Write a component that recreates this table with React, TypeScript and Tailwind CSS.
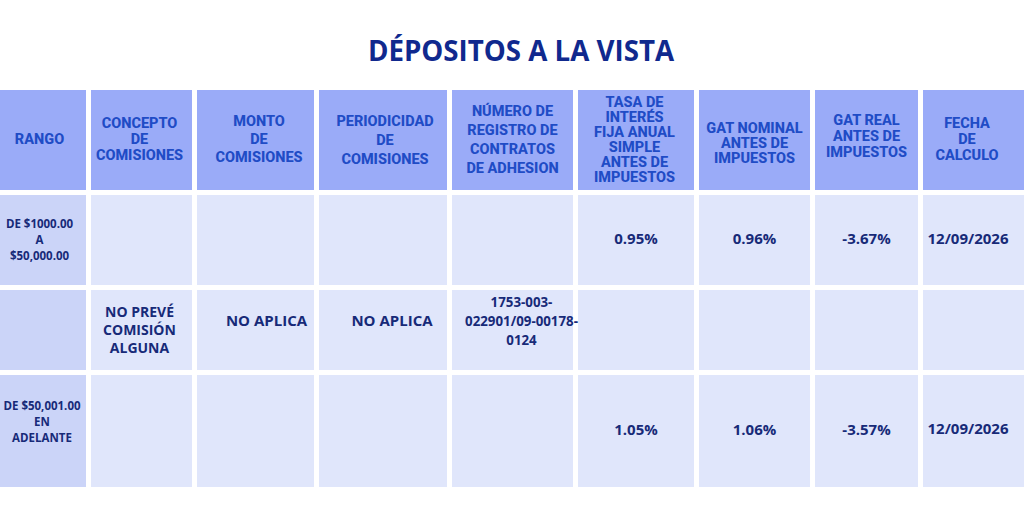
import React from 'react';

type Cell = {
  lines: string[];
  className?: string;
};

const headers: Cell[] = [
  { lines: ['RANGO'], className: 'pr-[7px] leading-[16px]' },
  { lines: ['CONCEPTO', 'DE', 'COMISIONES'], className: 'pr-[4px] leading-[16px]' },
  { lines: ['MONTO', 'DE', 'COMISIONES'], className: 'pl-[7px] leading-[18px]' },
  { lines: ['PERIODICIDAD', 'DE', 'COMISIONES'], className: 'pl-[4px] leading-[19px]' },
  { lines: ['NÚMERO DE', 'REGISTRO DE', 'CONTRATOS', 'DE ADHESION'], className: 'leading-[19px]' },
  { lines: ['TASA DE', 'INTERÉS', 'FIJA ANUAL', 'SIMPLE', 'ANTES DE', 'IMPUESTOS'], className: 'pr-[3px] leading-[15px]' },
  { lines: ['GAT NOMINAL', 'ANTES DE', 'IMPUESTOS'], className: 'pt-[6px] leading-[15px]' },
  { lines: ['GAT REAL', 'ANTES DE', 'IMPUESTOS'], className: 'pb-[7px] leading-[16px]' },
  { lines: ['FECHA', 'DE', 'CALCULO'], className: 'pr-[13px] leading-[16px]' },
];

const rows: Cell[][] = [
  [
    { lines: ['DE $1000.00', 'A', '$50,000.00'], className: 'pr-[7px] text-[11.5px] leading-[16px]' },
    { lines: [] },
    { lines: [] },
    { lines: [] },
    { lines: [] },
    { lines: ['0.95%'], className: 'pb-[4px] text-[15px]' },
    { lines: ['0.96%'], className: 'pb-[4px] text-[15px]' },
    { lines: ['-3.67%'], className: 'pb-[4px] text-[15px]' },
    { lines: ['12/09/2026'], className: 'pb-[4px] pr-[11px] text-[15px]' },
  ],
  [
    { lines: [] },
    { lines: ['NO PREVÉ', 'COMISIÓN', 'ALGUNA'], className: 'pr-[4px] text-[14px] leading-[18px]' },
    { lines: ['NO APLICA'], className: 'pl-[22px] pb-[19px] text-[15px]' },
    { lines: ['NO APLICA'], className: 'pl-[18px] pb-[19px] text-[15px]' },
    { lines: ['1753-003-', '022901/09-00178-', '0124'], className: 'relative z-10 pl-[18px] pb-[18px] text-[13.3px] leading-[19px]' },
    { lines: [] },
    { lines: [] },
    { lines: [] },
    { lines: [] },
  ],
  [
    { lines: ['DE $50,001.00', 'EN', 'ADELANTE'], className: 'pr-[2px] pb-[18px] text-[11.5px] leading-[16px]' },
    { lines: [] },
    { lines: [] },
    { lines: [] },
    { lines: [] },
    { lines: ['1.05%'], className: 'pb-[4px] text-[15px]' },
    { lines: ['1.06%'], className: 'pb-[4px] text-[15px]' },
    { lines: ['-3.57%'], className: 'pb-[4px] text-[15px]' },
    { lines: ['12/09/2026'], className: 'pb-[6px] pr-[11px] text-[15px]' },
  ],
];

const Lines: React.FC<{ lines: string[] }> = ({ lines }) => (
  <>
    {lines.map((line, i) => (
      <div key={i} className="whitespace-nowrap">
        {line}
      </div>
    ))}
  </>
);

const App: React.FC = () => {
  return (
    <div className="w-[1024px] h-[512px] bg-white overflow-hidden">
      <div className="h-[90px] flex items-center justify-center pt-[12px] pl-[18px]">
        <h1 className="text-[27.7px] font-bold text-[#10298e] font-['Open_Sans',sans-serif]">
          DÉPOSITOS A LA VISTA
        </h1>
      </div>

      <div className="grid grid-cols-[86px_101px_117px_128px_121px_116px_111px_103px_1fr] grid-rows-[100px_90px_80px_112px] gap-[5px]">
        {headers.map((h, i) => (
          <div
            key={`h-${i}`}
            className={`bg-[#9aabf8] flex flex-col items-center justify-center text-center text-[14.5px] font-extrabold text-[#1f4cc6] font-['Roboto',sans-serif] ${h.className ?? ''}`}
          >
            <Lines lines={h.lines} />
          </div>
        ))}

        {rows.map((row, r) =>
          row.map((c, i) => (
            <div
              key={`r-${r}-${i}`}
              className={`${i === 0 ? 'bg-[#cbd4f8]' : 'bg-[#e0e6fb]'} flex flex-col items-center justify-center text-center font-bold text-[#172a78] font-['Open_Sans',sans-serif] ${c.className ?? ''}`}
            >
              <Lines lines={c.lines} />
            </div>
          ))
        )}
      </div>
    </div>
  );
};

export default App;
